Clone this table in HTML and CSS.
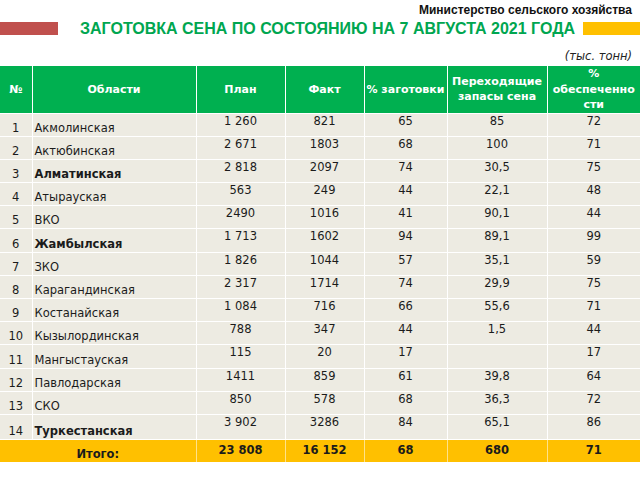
FILE: index.html
```html
<!DOCTYPE html>
<html lang="ru">
<head>
<meta charset="utf-8">
<title>Заготовка сена</title>
<link rel="stylesheet" href="styles.css">
</head>
<body>
<div class="page">
  <div class="ministry">Министерство сельского хозяйства</div>
  <div class="title-row">
    <div class="bar bar-red"></div>
    <h1 class="title">ЗАГОТОВКА СЕНА ПО СОСТОЯНИЮ НА 7 АВГУСТА 2021 ГОДА</h1>
    <div class="bar bar-yellow"></div>
  </div>
  <div class="units">(тыс. тонн)</div>
  <table class="grid">
    <colgroup>
      <col class="c-n"><col class="c-reg"><col class="c-plan"><col class="c-fact"><col class="c-pct"><col class="c-stock"><col class="c-sup">
    </colgroup>
    <thead>
      <tr class="head">
        <th>№</th>
        <th>Области</th>
        <th>План</th>
        <th>Факт</th>
        <th class="nowrap">% заготовки</th>
        <th>Переходящие<br>запасы сена</th>
        <th>%<br>обеспеченно<br>сти</th>
      </tr>
    </thead>
    <tbody>
      <tr><td class="n">1</td><td class="reg">Акмолинская</td><td>1 260</td><td>821</td><td>65</td><td>85</td><td>72</td></tr>
      <tr><td class="n">2</td><td class="reg">Актюбинская</td><td>2 671</td><td>1803</td><td>68</td><td>100</td><td>71</td></tr>
      <tr><td class="n">3</td><td class="reg b">Алматинская</td><td>2 818</td><td>2097</td><td>74</td><td>30,5</td><td>75</td></tr>
      <tr><td class="n">4</td><td class="reg">Атырауская</td><td>563</td><td>249</td><td>44</td><td>22,1</td><td>48</td></tr>
      <tr><td class="n">5</td><td class="reg">ВКО</td><td>2490</td><td>1016</td><td>41</td><td>90,1</td><td>44</td></tr>
      <tr><td class="n">6</td><td class="reg b">Жамбылская</td><td>1 713</td><td>1602</td><td>94</td><td>89,1</td><td>99</td></tr>
      <tr><td class="n">7</td><td class="reg">ЗКО</td><td>1 826</td><td>1044</td><td>57</td><td>35,1</td><td>59</td></tr>
      <tr><td class="n">8</td><td class="reg">Карагандинская</td><td>2 317</td><td>1714</td><td>74</td><td>29,9</td><td>75</td></tr>
      <tr><td class="n">9</td><td class="reg">Костанайская</td><td>1 084</td><td>716</td><td>66</td><td>55,6</td><td>71</td></tr>
      <tr><td class="n">10</td><td class="reg">Кызылординская</td><td>788</td><td>347</td><td>44</td><td>1,5</td><td>44</td></tr>
      <tr><td class="n">11</td><td class="reg">Мангыстауская</td><td>115</td><td>20</td><td>17</td><td></td><td>17</td></tr>
      <tr><td class="n">12</td><td class="reg">Павлодарская</td><td>1411</td><td>859</td><td>61</td><td>39,8</td><td>64</td></tr>
      <tr><td class="n">13</td><td class="reg">СКО</td><td>850</td><td>578</td><td>68</td><td>36,3</td><td>72</td></tr>
      <tr class="last"><td class="n">14</td><td class="reg b">Туркестанская</td><td>3 902</td><td>3286</td><td>84</td><td>65,1</td><td>86</td></tr>
    </tbody>
    <tfoot>
      <tr class="total">
        <td class="tlabel" colspan="2">Итого:</td>
        <td>23 808</td><td>16 152</td><td>68</td><td>680</td><td>71</td>
      </tr>
    </tfoot>
  </table>
</div>
</body>
</html>
```
FILE: styles.css
```css
html, body {
  margin: 0;
  padding: 0;
  background: #ffffff;
}
.page {
  width: 640px;
  height: 480px;
  overflow: hidden;
  font-family: "DejaVu Sans", sans-serif;
  color: #1b1b1b;
}
.ministry {
  font-family: "Liberation Sans", Arial, sans-serif;
  font-weight: bold;
  font-size: 12px;
  line-height: 14px;
  text-align: right;
  padding: 3px 8px 0 0;
  color: #111;
}
.title-row {
  display: flex;
  align-items: center;
  height: 21px;
  margin-top: 1px;
}
.bar {
  height: 13px;
  flex: none;
}
.bar-red {
  width: 58px;
  background: #c0504d;
}
.bar-yellow {
  width: 57px;
  margin-left: auto;
  background: #ffc000;
}
.title {
  margin: 0 0 0 22px;
  font-family: "Liberation Sans", Arial, sans-serif;
  font-weight: bold;
  font-size: 16px;
  line-height: 21px;
  color: #00a650;
  white-space: nowrap;
}
.units {
  font-style: italic;
  font-size: 11.5px;
  line-height: 14px;
  text-align: right;
  padding: 1px 8px 0 0;
  height: 16px;
  box-sizing: border-box;
  margin-top: 9px;
  color: #222;
}
.grid {
  width: 640px;
  table-layout: fixed;
  border-collapse: collapse;
  margin-top: 2px;
}
.c-n { width: 32px; }
.c-reg { width: 164px; }
.c-plan { width: 89px; }
.c-fact { width: 79px; }
.c-pct { width: 83px; }
.c-stock { width: 100px; }
.c-sup { width: 93px; }

.grid th, .grid td {
  border: 1px solid #ffffff;
  padding: 0;
}
.grid thead th {
  border-top: 0;
}
.head {
  height: 47px;
}
.head th {
  background: #00b050;
  color: #ffffff;
  font-size: 11px;
  font-weight: bold;
  line-height: 15.5px;
  text-align: center;
  vertical-align: middle;
}
.grid th:first-child, .grid td:first-child { border-left: 0; }
.grid th:last-child, .grid td:last-child { border-right: 0; }
.nowrap { white-space: nowrap; }

tbody tr {
  height: 23.2px;
}
tbody tr.last {
  height: 25px;
}
tbody td {
  background: #edebe2;
  font-size: 11.5px;
  line-height: 14px;
  text-align: center;
  vertical-align: top;
  padding-top: 3px;
}
tbody td.n, tbody td.reg {
  vertical-align: bottom;
  padding: 0 0 1px 0;
}
tbody td.reg {
  text-align: left;
  padding-left: 2px;
}
.b { font-weight: bold; }

.total {
  height: 23px;
}
.total td {
  background: #ffc000;
  font-weight: bold;
  font-size: 11.5px;
  line-height: 14px;
  text-align: center;
  vertical-align: top;
  padding-top: 3px;
  border-color: #ffe28a;
  border-bottom: 0;
}
.total td.tlabel {
  vertical-align: bottom;
  padding: 0 0 1px 0;
}
```
